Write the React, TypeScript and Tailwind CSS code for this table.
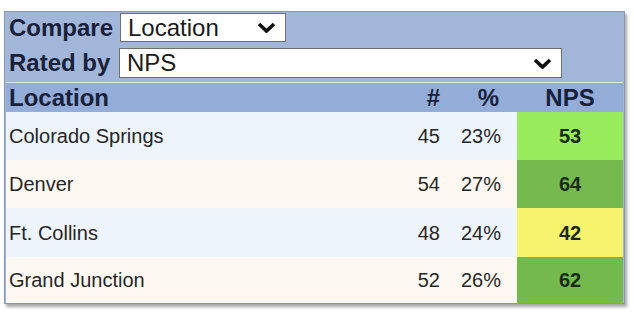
import React from "react";

type Row = { name: string; count: number; pct: string; nps: number; bg: string; npsBg: string };

const rows: Row[] = [
  { name: "Colorado Springs", count: 45, pct: "23%", nps: 53, bg: "bg-[#eef4fb]", npsBg: "bg-[#98ec5c]" },
  { name: "Denver", count: 54, pct: "27%", nps: 64, bg: "bg-[#fdf8f1]", npsBg: "bg-[#76b94f]" },
  { name: "Ft. Collins", count: 48, pct: "24%", nps: 42, bg: "bg-[#eef4fb]", npsBg: "bg-[#f6f36c]" },
  { name: "Grand Junction", count: 52, pct: "26%", nps: 62, bg: "bg-[#fdf8f1]", npsBg: "bg-[#74b94c]" },
];

const heights = ["h-[48px]", "h-[48px]", "h-[49px]", "h-[46px]"];

function Chevron() {
  return (
    <svg width="19" height="11" viewBox="0 0 19 11" className="shrink-0">
      <polyline points="2,2 9.5,9 17,2" fill="none" stroke="#111" strokeWidth="3.6" />
    </svg>
  );
}

function FakeSelect({ value, className }: { value: string; className: string }) {
  return (
    <div
      className={`flex items-center justify-between bg-white border border-[#6f6f6f] pl-[7px] pr-[9px] text-[24px] text-[#1a1a1a] leading-none ${className}`}
    >
      <span>{value}</span>
      <Chevron />
    </div>
  );
}

export default function App() {
  return (
    <div className="w-[634px] h-[313px] bg-white overflow-hidden" style={{ fontFamily: '"Liberation Sans", Arial, sans-serif' }}>
      <div className="ml-[4px] mt-[11px] w-[621px] border border-[#8596b0] bg-[#a2b6da] pl-[1px] pr-[1px] shadow-[2px_3px_3px_rgba(0,0,0,0.35)]">
        {/* filters */}
        <div className="flex items-center mt-[1px] h-[29px]">
          <span className="w-[114px] pl-[3px] text-[24px] font-bold text-[#18213a] leading-none">Compare</span>
          <FakeSelect value="Location" className="w-[166px] h-[29px]" />
        </div>
        <div className="flex items-center mt-[6px] h-[30px]">
          <span className="w-[113px] pl-[3px] text-[24px] font-bold text-[#18213a] leading-none">Rated by</span>
          <FakeSelect value="NPS" className="w-[443px] h-[30px]" />
        </div>

        {/* table */}
        <div className="mt-[4px] border-t border-[#dfe7f4]">
          <div className="grid grid-cols-[1fr_60px_66px_106px] h-[29px] items-center bg-[#93acd8] text-[24px] font-bold text-[#18213a] leading-none">
            <div className="pl-[3px]">Location</div>
            <div className="text-right pr-[11px]">#</div>
            <div className="text-right pr-[18px]">%</div>
            <div className="text-center">NPS</div>
          </div>
          {rows.map((r, i) => (
            <div
              key={r.name}
              className={`grid grid-cols-[1fr_60px_66px_106px] items-center text-[20px] text-[#262626] leading-none ${r.bg} ${heights[i]}`}
            >
              <div className="pl-[3px]">{r.name}</div>
              <div className="text-right pr-[11px]">{r.count}</div>
              <div className="text-right pr-[16px]">{r.pct}</div>
              <div className={`h-full flex items-center justify-center font-bold text-[#1b2a14] ${r.npsBg}`}>{r.nps}</div>
            </div>
          ))}
        </div>
      </div>
    </div>
  );
}
